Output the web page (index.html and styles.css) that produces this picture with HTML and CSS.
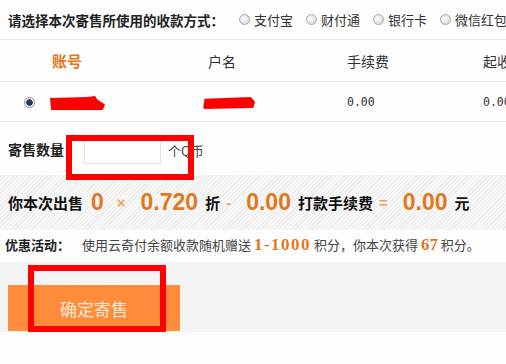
FILE: index.html
```html
<!DOCTYPE html>
<html lang="zh">
<head>
  <meta charset="utf-8">
  <title>寄售</title>
  <link rel="stylesheet" href="styles.css">
</head>
<body>
  <div class="pay-way">
    <span class="pay-title">请选择本次寄售所使用的收款方式：</span>
    <label class="opt"><span class="radio"></span>支付宝</label>
    <label class="opt"><span class="radio"></span>财付通</label>
    <label class="opt"><span class="radio"></span>银行卡</label>
    <label class="opt"><span class="radio"></span>微信红包</label>
  </div>

  <div class="acc-head">
    <span class="col-acc hl">账号</span>
    <span class="col-name">户名</span>
    <span class="col-fee">手续费</span>
    <span class="col-min">起收</span>
  </div>
  <div class="acc-row">
    <span class="col-radio"><span class="radio checked"></span></span>
    <span class="col-acc"><span class="scribble s1"></span></span>
    <span class="col-name"><span class="scribble s2"></span></span>
    <span class="col-fee num">0.00</span>
    <span class="col-min num">0.00</span>
  </div>

  <div class="qty-row">
    <span class="qty-label">寄售数量</span>
    <span class="qty-input"></span>
    <span class="unit">个Q币</span>
    <span class="mark mark-qty"></span>
  </div>

  <div class="sum-row">
    你本次出售
    <b class="big">0</b><b class="op">×</b><b class="big">0.720</b>折
    <b class="op">-</b><b class="big">0.00</b>打款手续费
    <b class="op">=</b><b class="big">0.00</b>元
  </div>

  <div class="promo">
    <b class="promo-title">优惠活动：</b>使用云奇付余额收款随机赠送 <b class="pt wide">1-1000</b> 积分，你本次获得 <b class="pt">67</b> 积分。
  </div>

  <div class="btn-area">
    <button class="submit">确定寄售</button>
    <span class="mark mark-btn"></span>
  </div>
</body>
</html>
```

FILE: styles.css
```css
body{
    margin: 0;
    background: #fdfdfd;
    font-family: "Noto Sans CJK SC", "Liberation Sans", sans-serif;
    font-size: 13px;
    color: #333;
    width: 506px;
    overflow: hidden;
}
.pay-way{
    height: 39px;
    display: flex;
    align-items: center;
    padding-left: 8px;
    border-bottom: 1px solid #e6e6e6;
    white-space: nowrap;
}
.pay-title{
    font-weight: bold;
    font-size: 13.5px;
    color: #222;
    margin-right: 15px;
}
.opt{
    display: flex;
    align-items: center;
    margin-right: 13px;
    font-size: 13px;
    color: #333;
}
.radio{
    width: 11px;
    height: 11px;
    border-radius: 50%;
    border: 1px solid #aaa;
    background: radial-gradient(circle at 40% 40%, #fff, #ccc);
    margin-right: 4px;
    display: inline-block;
    box-sizing: border-box;
}
.radio.checked{
    background: radial-gradient(circle, #2a3a50 0 3px, #fff 3.5px);
    border-color: #7a8a9a;
}
.acc-head, .acc-row{
    display: grid;
    grid-template-columns: 52px 156px 139px 136px 80px;
    align-items: center;
    border-bottom: 1px solid #e6e6e6;
    white-space: nowrap;
}
.acc-head{
    height: 41px;
    font-size: 14px;
    color: #333;
}
.acc-head .col-acc{ grid-column: 2; }
.hl{
    color: #e2781c;
    font-weight: bold;
    font-size: 15px;
}
.acc-row{
    height: 39px;
}
.col-radio{
    display: flex;
    padding-left: 24px;
}
.col-radio .radio{ margin: 2px 0 0 0; }
.scribble{
    display: block;
    background: #f00;
    margin-top: 3px;
}
.s1{
    width: 55px;
    height: 14px;
    margin-left: -2px;
    border-radius: 2px 6px 3px 1px;
    clip-path: polygon(0 15%, 68% 8%, 82% 0, 86% 25%, 100% 60%, 96% 100%, 2% 100%);
}
.s2{
    width: 52px;
    height: 12px;
    margin-left: -5px;
    border-radius: 3px 5px 5px 2px;
    clip-path: polygon(3% 15%, 92% 0, 100% 40%, 97% 92%, 0 100%);
}
.num{
    font-family: "DejaVu Sans Mono", monospace;
    font-size: 11.5px;
    color: #333;
}
.qty-row{
    position: relative;
    height: 53px;
    display: flex;
    align-items: center;
    padding-left: 8px;
}
.qty-label{
    font-weight: bold;
    font-size: 14px;
    color: #222;
    margin-right: 20px;
}
.qty-input{
    width: 75px;
    height: 24px;
    border: 1px solid #e2e2e2;
    background: #fff;
    margin: 4px 7px 0 0;
}
.unit{ font-size: 13px; color: #444; margin-top: 4px; }
.mark{
    position: absolute;
    border: 6px solid #f00;
    box-sizing: border-box;
}
.mark-qty{
    left: 66px;
    top: 13px;
    width: 128px;
    height: 45px;
}
.sum-row{
    height: 55px;
    display: flex;
    align-items: center;
    padding-left: 8px;
    font-weight: bold;
    font-size: 15px;
    color: #111;
    white-space: nowrap;
    background: repeating-linear-gradient(-45deg, #f7f7f7 0 2px, #ececec 2px 3px);
}
.big{
    font-family: "Liberation Sans", sans-serif;
    font-size: 23px;
    color: #e2781c;
    margin: 0 7px 0 8px;
}
.op{
    font-family: "Liberation Sans", sans-serif;
    color: #f0a060;
    font-size: 15px;
    margin: 0 7px 0 6px;
}
.promo{
    height: 32px;
    line-height: 30px;
    padding-left: 5px;
    font-size: 13px;
    color: #444;
    white-space: nowrap;
}
.promo-title{
    color: #222;
    margin-right: 12px;
}
.pt{
    font-family: "Liberation Serif", serif;
    font-size: 17px;
    color: #e2781c;
}
.wide{ letter-spacing: 1.5px; }
.btn-area{
    position: relative;
    height: 70px;
    background: #f4f4f4;
    padding: 23px 0 0 8px;
    box-sizing: border-box;
}
.submit{
    width: 172px;
    height: 46px;
    border: none;
    background: #ff8c3a;
    color: #fbe9d9;
    font-family: "Noto Sans CJK SC", sans-serif;
    font-size: 17px;
    display: block;
}
.mark-btn{
    left: 28px;
    top: 3px;
    width: 138px;
    height: 67px;
}
```
